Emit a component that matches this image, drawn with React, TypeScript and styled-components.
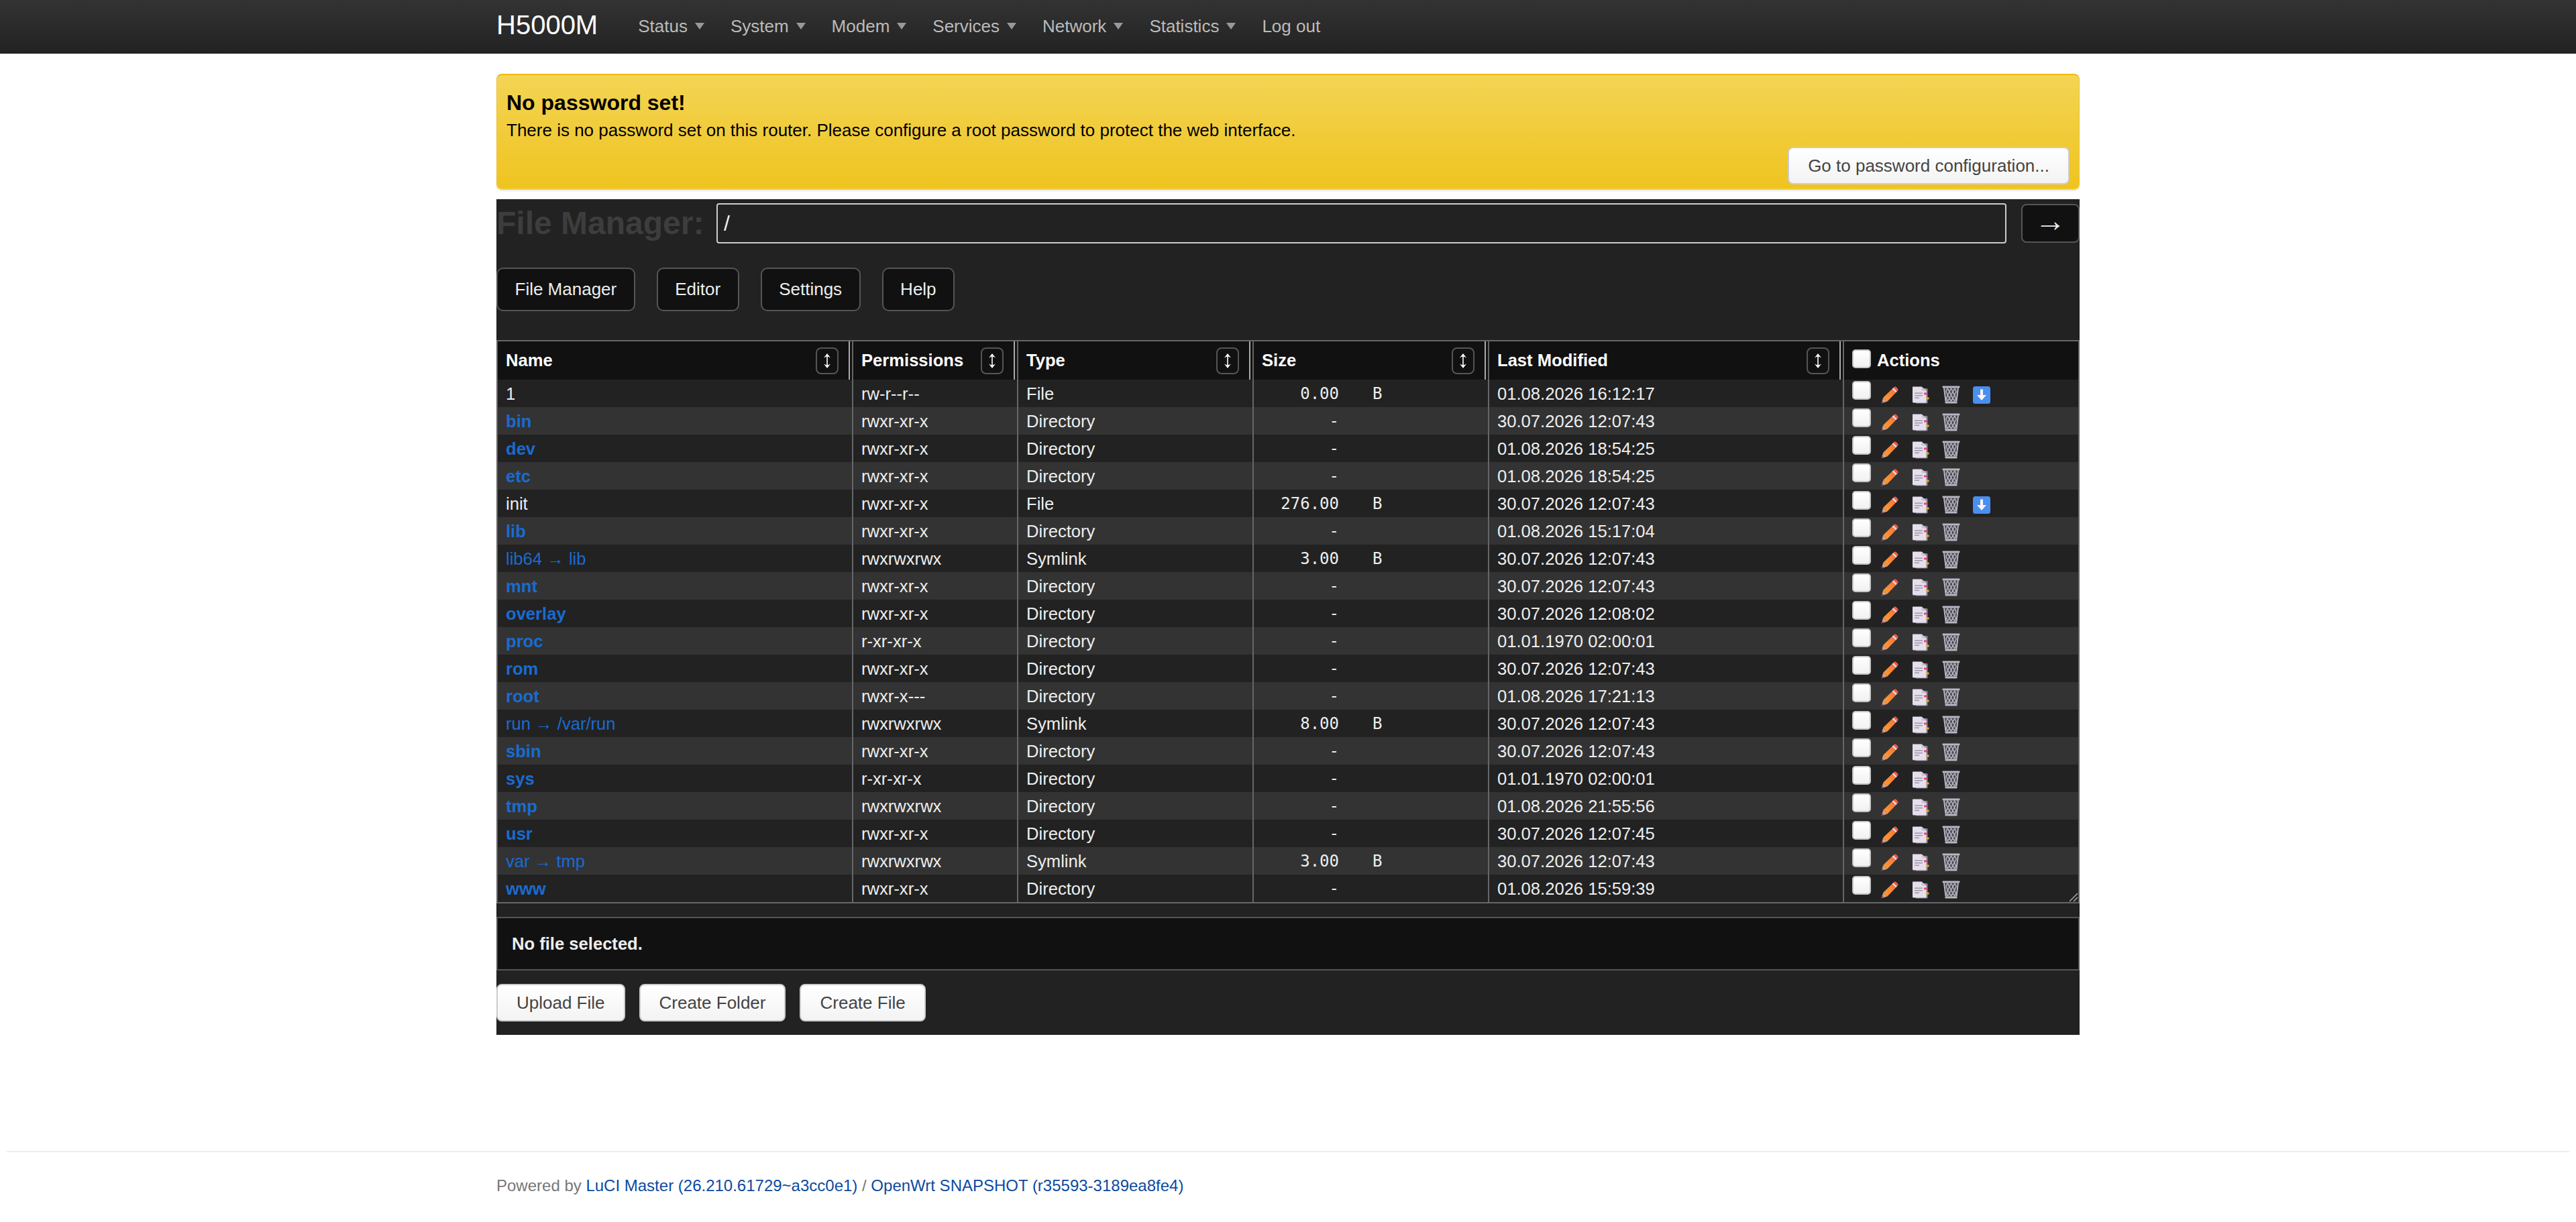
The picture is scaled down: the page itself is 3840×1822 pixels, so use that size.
import React from 'react';
import styled, { createGlobalStyle } from 'styled-components';

const GlobalStyle = createGlobalStyle`
  html, body {
    margin: 0;
    padding: 0;
    background: #fff;
  }
  body {
    font-family: "Liberation Sans", Arial, sans-serif;
    font-size: 26px;
    color: #333;
  }
`;

const Page = styled.div`
  display: flex;
  flex-direction: column;
  min-height: 1822px;
`;

const NavBar = styled.header`
  height: 80px;
  background: linear-gradient(#333, #222);
  display: flex;
  align-items: center;
  padding-left: 740px;
`;

const Brand = styled.a`
  color: #fff;
  font-size: 40px;
  margin-right: 60px;
  position: relative;
  top: -3px;
`;

const NavItem = styled.a`
  color: #bbb;
  font-size: 26px;
  margin-right: 39px;
  position: relative;
  top: -1px;
  display: flex;
  align-items: center;
  gap: 11px;
`;

const Caret = styled.span`
  display: inline-block;
  border-top: 10px solid #999;
  border-left: 7px solid transparent;
  border-right: 7px solid transparent;
`;

const Main = styled.main`
  width: 2360px;
  margin: 30px 0 0 740px;
`;

const Alert = styled.div`
  box-sizing: border-box;
  height: 173px;
  padding: 19px 14px 0;
  border: 1px solid #f0c33a;
  border-top: 2px solid #efba0c;
  border-bottom: 2px solid #f3d23e;
  border-radius: 8px;
  background: linear-gradient(#f3d454, #efc420);
  box-shadow: 0 2px 3px rgba(0, 0, 0, 0.08);
  color: #000;
  position: relative;
`;

const AlertTitle = styled.h4`
  margin: 0;
  font-size: 32px;
  line-height: 45px;
  font-weight: bold;
`;

const AlertText = styled.p`
  margin: 0;
  font-size: 26px;
  line-height: 36px;
`;

const LightButton = styled.button`
  box-sizing: border-box;
  height: 56px;
  padding: 0 28px;
  border: 2px solid #ccc;
  border-radius: 8px;
  background: linear-gradient(#fff, #f3f3f3);
  color: #444;
  font: 26px "Liberation Sans", Arial, sans-serif;
`;

const AlertAction = styled.div`
  position: absolute;
  right: 14px;
  bottom: 6px;
`;

const Panel = styled.section`
  margin-top: 14px;
  background: #222;
  color: #eee;
  height: 1246px;
  display: flex;
  flex-direction: column;
`;

const PathBar = styled.div`
  display: flex;
  align-items: center;
  padding-top: 6px;
  height: 60px;
`;

const PathTitle = styled.h2`
  margin: 0;
  width: 328px;
  flex: none;
  color: #3d3d3d;
  font-size: 48px;
  line-height: 60px;
  font-weight: bold;
  white-space: nowrap;
`;

const PathInput = styled.input`
  box-sizing: border-box;
  flex: 1;
  height: 60px;
  margin-right: 22px;
  padding: 0 9px;
  background: #222;
  border: 2px solid #ccc;
  border-radius: 4px;
  color: #eee;
  font: 32px "Liberation Sans", Arial, sans-serif;
`;

const GoButton = styled.button`
  box-sizing: border-box;
  flex: none;
  width: 87px;
  height: 58px;
  border: 2px solid #555;
  border-radius: 8px;
  background: #111;
  color: #eee;
  font: 46px/46px "Liberation Sans", "DejaVu Sans", sans-serif;
  padding: 0 0 10px;
`;

const Tabs = styled.nav`
  display: flex;
  gap: 32px;
  margin-top: 36px;
`;

const Tab = styled.button`
  box-sizing: border-box;
  height: 65px;
  padding: 0 25.5px;
  border: 2px solid #555;
  border-radius: 10px;
  background: #111;
  color: #eee;
  font: 26px "Liberation Sans", Arial, sans-serif;
`;

const TableWrap = styled.div`
  box-sizing: border-box;
  position: relative;
  margin-top: 43px;
  width: 2360px;
  height: 840px;
  border: 2px solid #666;
  overflow: hidden;
`;

const ResizeGrip = styled.svg`
  position: absolute;
  right: 0;
  bottom: 0;
`;

const Table = styled.table`
  width: 2356px;
  table-layout: fixed;
  border-collapse: collapse;
`;

const Th = styled.th`
  position: relative;
  box-sizing: border-box;
  height: 57px;
  padding: 0 12px;
  background: #111;
  color: #fff;
  font-size: 25.6px;
  font-weight: bold;
  text-align: left;
  border-right: 2px solid #666;
  &:last-child { border-right: 0; }
`;

const ThInner = styled.div`
  display: flex;
  align-items: center;
  justify-content: space-between;
  padding-right: 8px;
`;

const ActionsHead = styled.div`
  display: flex;
  align-items: center;
  gap: 9px;
`;

const Grip = styled.span`
  position: absolute;
  right: 3px;
  top: 0;
  bottom: 0;
  width: 2px;
  background: #aaa;
`;

const SortButton = styled.button`
  box-sizing: border-box;
  display: flex;
  align-items: center;
  justify-content: center;
  width: 34px;
  height: 40px;
  padding: 0;
  border: 2px solid #555;
  border-radius: 8px;
  background: #111;
`;

const Row = styled.tr<{ $odd: boolean }>`
  background: ${(p) => (p.$odd ? '#333' : '#222')};
`;

const Td = styled.td`
  box-sizing: border-box;
  height: 41px;
  padding: 2px 12px 0;
  font-size: 25.6px;
  line-height: 39px;
  color: #eee;
  white-space: nowrap;
  overflow: hidden;
  border-right: 2px solid #666;
`;

const ActionTd = styled(Td)`
  padding-top: 0;
  border-right: 0;
`;

const NameLink = styled.a<{ $kind: string }>`
  color: ${(p) => (p.$kind === 'File' ? '#eee' : '#1a6bd0')};
  font-weight: ${(p) => (p.$kind === 'Directory' ? 'bold' : 'normal')};
`;

const SizeCell = styled.div`
  display: flex;
  font-family: "DejaVu Sans Mono", monospace;
  font-size: 24px;
`;

const SizeNum = styled.span`
  display: block;
  width: 115px;
  text-align: right;
`;

const SizeUnit = styled.span`
  margin-left: 50px;
`;

const ActionCell = styled.div`
  display: flex;
  align-items: flex-start;
  height: 41px;
`;

const Check = styled.input.attrs({ type: 'checkbox' })`
  appearance: none;
  box-sizing: border-box;
  flex: none;
  width: 28px;
  height: 28px;
  margin: 0;
  border: 2px solid #c4c4c4;
  border-radius: 5px;
  background: linear-gradient(#fff, #f1f1f1);
`;

const HeadCheck = styled(Check)`
  margin-top: -6px;
`;

const RowCheck = styled(Check)`
  margin-top: 2px;
  margin-right: 15px;
`;

const IconSlot = styled.span`
  display: block;
  flex: none;
  width: 26px;
  height: 26px;
  margin-top: 8px;
  margin-right: 19.5px;
`;

const StatusBar = styled.div`
  box-sizing: border-box;
  margin-top: 20px;
  height: 80px;
  padding: 0 21px;
  border: 2px solid #555;
  background: #111;
  color: #eee;
  font-size: 25.6px;
  font-weight: bold;
  line-height: 76px;
`;

const BottomActions = styled.div`
  display: flex;
  gap: 21px;
  margin-top: 20px;
`;

const Footer = styled.footer`
  margin: auto 10px 0;
  border-top: 2px solid #eee;
  padding: 33px 0 37px 730px;
  font-size: 24px;
  line-height: 34px;
  color: #777;
`;

const FooterLink = styled.a`
  color: #0d4aa0;
`;

const SortIcon = () => (
  <svg viewBox="0 0 12 22" width="12" height="22">
    <path d="M5.2 4 H6.8 V18 H5.2 Z" fill="#fff" />
    <path d="M6 0 L11 6.5 Q7.5 4.5 6 4.5 Q4.5 4.5 1 6.5 Z" fill="#fff" />
    <path d="M6 22 L11 15.5 Q7.5 17.5 6 17.5 Q4.5 17.5 1 15.5 Z" fill="#fff" />
  </svg>
);

const PencilIcon = () => (
  <svg viewBox="0 0 26 26" width="26" height="26">
    <defs>
      <linearGradient id="pencil-body" x1="0" y1="1" x2="1" y2="0">
        <stop offset="0" stopColor="#ffa030" />
        <stop offset="1" stopColor="#f4703a" />
      </linearGradient>
    </defs>
    <path d="M3.5 16.5 L16.5 4 L22 9.5 L9.5 22.5 Z" fill="url(#pencil-body)" />
    <path d="M3.5 16.5 L9.5 22.5 L0.5 25.5 Z" fill="#d9a07c" />
    <path d="M1.5 21.8 L4.2 24.2 L0.5 25.5 Z" fill="#7c3f6e" />
    <path d="M16.5 4 L18.5 2 L24 7.5 L22 9.5 Z" fill="#e8d8e8" />
    <path d="M18.5 2 L19.8 0.8 Q21 0 22.2 0.8 L25.2 3.8 Q26 5 25.2 6.2 L24 7.5 Z" fill="#f8573f" />
  </svg>
);

const MemoIcon = () => (
  <svg viewBox="0 0 26 26" width="26" height="26">
    <path d="M4 3 H22 Q23.5 3 23.5 4.5 V24 Q23.5 25.5 22 25.5 H6 Z" fill="#8d8794" />
    <path d="M1.5 0.5 H14.5 L21.5 6.5 V23 Q21.5 24.5 20 24.5 H3 Q1 24.5 1 23 V1.5 Q1 0.5 1.5 0.5 Z" fill="#e6deed" />
    <path d="M14.5 0.5 L21.5 6.5 H16 Q14.5 6.5 14.5 5 Z" fill="#c9c0d2" />
    <rect x="4" y="9.5" width="12" height="1.4" fill="#9a94a2" />
    <rect x="4" y="13" width="12" height="1.4" fill="#9a94a2" />
    <rect x="4" y="16.5" width="7" height="1.4" fill="#9a94a2" />
    <rect x="18" y="9.5" width="5" height="3" rx="0.5" fill="#e8447a" />
    <rect x="21" y="16.5" width="4.5" height="3" rx="0.5" fill="#e2ad3c" />
  </svg>
);

const TrashIcon = () => (
  <svg viewBox="0 0 27 27" width="27" height="27">
    <path d="M3 3 H24 L21.5 24 H5.5 Z" fill="#4a4750" />
    <path d="M0.5 1.2 Q0.5 0.5 1.5 0.5 H25.5 Q26.5 0.5 26.5 1.2 L26 3.5 H1 Z" fill="#b9b5c2" />
    <path d="M4.5 25 Q4 26.5 5.5 26.5 H21.5 Q23 26.5 22.5 25 L22.3 23.5 H4.7 Z" fill="#b9b5c2" />
    <path d="M3 3.5 L5.5 23.5 M24 3.5 L21.5 23.5" stroke="#b9b5c2" strokeWidth="2" />
    <path
      d="M8 4 L6 9 L8.5 14 L6.5 19 L8 23 M13.5 4 L11 9 L13.5 14 L11 19 L13.5 23 M13.5 4 L16 9 L13.5 14 L16 19 L13.5 23 M19 4 L21 9 L18.5 14 L20.5 19 L19 23 M8 4 L11 9 L8.5 14 L11 19 L8 23 M19 4 L16 9 L18.5 14 L16 19 L19 23"
      fill="none"
      stroke="#b4b0bc"
      strokeWidth="1.5"
    />
  </svg>
);

const DownloadIcon = () => (
  <svg viewBox="0 0 26 26" width="26" height="26">
    <rect x="0" y="0" width="26" height="26" rx="3.5" fill="#4a8ff0" />
    <path d="M11 4.5 H15 V13 H20 L13 21 L6 13 H11 Z" fill="#f5f3fa" />
  </svg>
);

interface FileEntry {
  name: string;
  perms: string;
  kind: string;
  size?: string;
  modified: string;
}

const files: FileEntry[] = [
  { name: '1', perms: 'rw-r--r--', kind: 'File', size: '0.00', modified: '01.08.2026 16:12:17' },
  { name: 'bin', perms: 'rwxr-xr-x', kind: 'Directory', modified: '30.07.2026 12:07:43' },
  { name: 'dev', perms: 'rwxr-xr-x', kind: 'Directory', modified: '01.08.2026 18:54:25' },
  { name: 'etc', perms: 'rwxr-xr-x', kind: 'Directory', modified: '01.08.2026 18:54:25' },
  { name: 'init', perms: 'rwxr-xr-x', kind: 'File', size: '276.00', modified: '30.07.2026 12:07:43' },
  { name: 'lib', perms: 'rwxr-xr-x', kind: 'Directory', modified: '01.08.2026 15:17:04' },
  { name: 'lib64 → lib', perms: 'rwxrwxrwx', kind: 'Symlink', size: '3.00', modified: '30.07.2026 12:07:43' },
  { name: 'mnt', perms: 'rwxr-xr-x', kind: 'Directory', modified: '30.07.2026 12:07:43' },
  { name: 'overlay', perms: 'rwxr-xr-x', kind: 'Directory', modified: '30.07.2026 12:08:02' },
  { name: 'proc', perms: 'r-xr-xr-x', kind: 'Directory', modified: '01.01.1970 02:00:01' },
  { name: 'rom', perms: 'rwxr-xr-x', kind: 'Directory', modified: '30.07.2026 12:07:43' },
  { name: 'root', perms: 'rwxr-x---', kind: 'Directory', modified: '01.08.2026 17:21:13' },
  { name: 'run → /var/run', perms: 'rwxrwxrwx', kind: 'Symlink', size: '8.00', modified: '30.07.2026 12:07:43' },
  { name: 'sbin', perms: 'rwxr-xr-x', kind: 'Directory', modified: '30.07.2026 12:07:43' },
  { name: 'sys', perms: 'r-xr-xr-x', kind: 'Directory', modified: '01.01.1970 02:00:01' },
  { name: 'tmp', perms: 'rwxrwxrwx', kind: 'Directory', modified: '01.08.2026 21:55:56' },
  { name: 'usr', perms: 'rwxr-xr-x', kind: 'Directory', modified: '30.07.2026 12:07:45' },
  { name: 'var → tmp', perms: 'rwxrwxrwx', kind: 'Symlink', size: '3.00', modified: '30.07.2026 12:07:43' },
  { name: 'www', perms: 'rwxr-xr-x', kind: 'Directory', modified: '01.08.2026 15:59:39' },
];

const navItems = ['Status', 'System', 'Modem', 'Services', 'Network', 'Statistics'];
const columns = ['Name', 'Permissions', 'Type', 'Size', 'Last Modified'];

export default function App() {
  return (
    <Page>
      <GlobalStyle />
      <NavBar>
        <Brand>H5000M</Brand>
        {navItems.map((item) => (
          <NavItem key={item}>
            {item}
            <Caret />
          </NavItem>
        ))}
        <NavItem>Log out</NavItem>
      </NavBar>
      <Main>
        <Alert>
          <AlertTitle>No password set!</AlertTitle>
          <AlertText>There is no password set on this router. Please configure a root password to protect the web interface.</AlertText>
          <AlertAction>
            <LightButton>Go to password configuration...</LightButton>
          </AlertAction>
        </Alert>
        <Panel>
          <PathBar>
            <PathTitle>File Manager:</PathTitle>
            <PathInput defaultValue="/" />
            <GoButton>→</GoButton>
          </PathBar>
          <Tabs>
            <Tab>File Manager</Tab>
            <Tab>Editor</Tab>
            <Tab>Settings</Tab>
            <Tab>Help</Tab>
          </Tabs>
          <TableWrap>
            <Table>
              <colgroup>
                <col width="529" />
                <col width="246" />
                <col width="351" />
                <col width="351" />
                <col width="529" />
                <col />
              </colgroup>
              <thead>
                <tr>
                  {columns.map((col) => (
                    <Th key={col}>
                      <ThInner>
                        {col}
                        <SortButton><SortIcon /></SortButton>
                      </ThInner>
                      <Grip />
                    </Th>
                  ))}
                  <Th>
                    <ActionsHead>
                      <HeadCheck />
                      Actions
                    </ActionsHead>
                  </Th>
                </tr>
              </thead>
              <tbody>
                {files.map((file, index) => (
                  <Row key={file.name} $odd={index % 2 === 1}>
                    <Td>
                      <NameLink $kind={file.kind}>{file.name}</NameLink>
                    </Td>
                    <Td>{file.perms}</Td>
                    <Td>{file.kind}</Td>
                    <Td>
                      <SizeCell>
                        <SizeNum>{file.size ?? '-'}</SizeNum>
                        {file.size && <SizeUnit>B</SizeUnit>}
                      </SizeCell>
                    </Td>
                    <Td>{file.modified}</Td>
                    <ActionTd>
                      <ActionCell>
                        <RowCheck />
                        <IconSlot><PencilIcon /></IconSlot>
                        <IconSlot><MemoIcon /></IconSlot>
                        <IconSlot><TrashIcon /></IconSlot>
                        {file.kind === 'File' && <IconSlot><DownloadIcon /></IconSlot>}
                      </ActionCell>
                    </ActionTd>
                  </Row>
                ))}
              </tbody>
            </Table>
            <ResizeGrip viewBox="0 0 14 14" width="14" height="14">
              <path d="M1 13 L13 1 M7 13 L13 7" stroke="#aaa" strokeWidth="1.5" />
            </ResizeGrip>
          </TableWrap>
          <StatusBar>No file selected.</StatusBar>
          <BottomActions>
            <LightButton>Upload File</LightButton>
            <LightButton>Create Folder</LightButton>
            <LightButton>Create File</LightButton>
          </BottomActions>
        </Panel>
      </Main>
      <Footer>
        Powered by <FooterLink>LuCI Master (26.210.61729~a3cc0e1)</FooterLink> / <FooterLink>OpenWrt SNAPSHOT (r35593-3189ea8fe4)</FooterLink>
      </Footer>
    </Page>
  );
}
